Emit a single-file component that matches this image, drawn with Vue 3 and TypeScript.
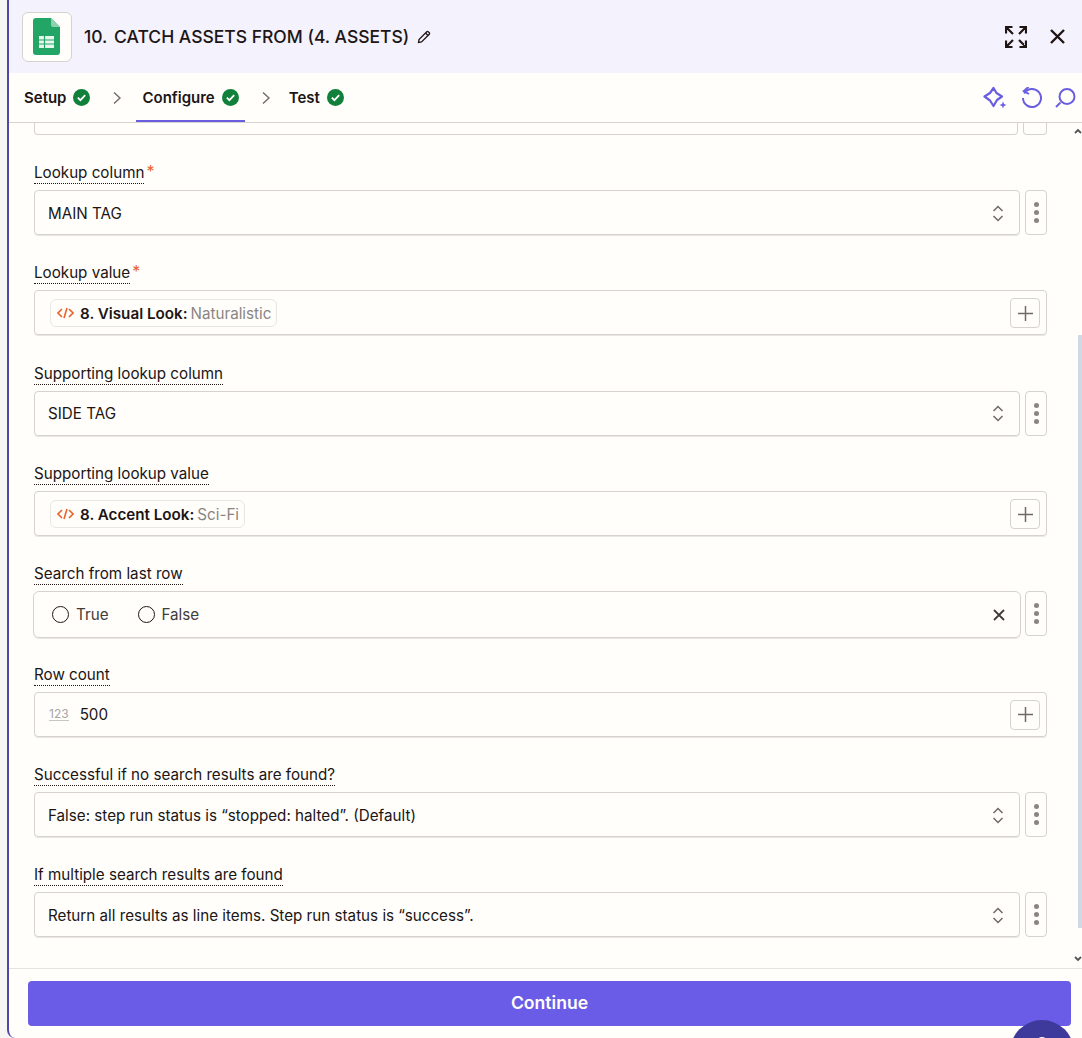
<script setup lang="ts">
interface Field {
  label: string
  required?: boolean
  kind: 'select' | 'pill' | 'radio' | 'number'
  value?: string
  pillKey?: string
}
const fields: Field[] = [
  { label: 'Lookup column', required: true, kind: 'select', value: 'MAIN TAG' },
  { label: 'Lookup value', required: true, kind: 'pill', pillKey: '8. Visual Look:', value: 'Naturalistic' },
  { label: 'Supporting lookup column', kind: 'select', value: 'SIDE TAG' },
  { label: 'Supporting lookup value', kind: 'pill', pillKey: '8. Accent Look:', value: 'Sci-Fi' },
  { label: 'Search from last row', kind: 'radio' },
  { label: 'Row count', kind: 'number', value: '500' },
  { label: 'Successful if no search results are found?', kind: 'select', value: 'False: step run status is “stopped: halted”. (Default)' },
  { label: 'If multiple search results are found', kind: 'select', value: 'Return all results as line items. Step run status is “success”.' },
]
const tabs = [
  { name: 'Setup', active: false },
  { name: 'Configure', active: true },
  { name: 'Test', active: false },
]
</script>

<template>
  <div class="page">
    <div class="panel">
      <header class="head">
        <div class="logo">
          <svg class="sheet" width="27" height="37" viewBox="0 0 27 37">
            <path d="M3 0H18L27 9V34a3 3 0 0 1-3 3H3a3 3 0 0 1-3-3V3a3 3 0 0 1 3-3Z" fill="#23a566" />
            <path d="M18 0L27 9H20a2 2 0 0 1-2-2Z" fill="#8ed1b1" />
            <path d="M6 18H21V30H6Z" fill="#e8f6ee" />
            <path d="M6 22H21M6 26H21M11.500 18V30" stroke="#23a566" stroke-width="1.200" />
          </svg>
        </div>
        <h1 class="title"><span class="step-no">10.</span> CATCH ASSETS FROM (4. ASSETS)</h1>
        <svg class="pencil" width="14" height="14" viewBox="0 0 14 14" fill="none" stroke="#201515" stroke-width="1.300">
          <path d="M1.500 12.500L2 9.500L9.800 1.700a1 1 0 0 1 1.400 0L12.300 2.800a1 1 0 0 1 0 1.400L4.500 12Z" />
          <path d="M8.500 3L11 5.500" />
        </svg>
        <div class="head-actions">
          <svg width="22" height="22" viewBox="0 0 22 22" fill="none" stroke="#201515" stroke-width="2.200">
            <path d="M1 7.500V1H7.500M1.500 1.500L8 8M14.500 1H21V7.500M20.500 1.500L14 8M1 14.500V21H7.500M1.500 20.500L8 14M21 14.500V21H14.500M20.500 20.500L14 14" />
          </svg>
          <svg class="close" width="15" height="15" viewBox="0 0 15 15" fill="none" stroke="#201515" stroke-width="2.400">
            <path d="M1 1L14 14M14 1L1 14" />
          </svg>
        </div>
      </header>

      <nav class="tabs">
        <template v-for="(t, i) in tabs" :key="t.name">
          <svg v-if="i > 0" class="chev" width="8" height="14" viewBox="0 0 8 14" fill="none" stroke="#6f6a68" stroke-width="1.400">
            <path d="M1 1.500L7 7L1 12.500" />
          </svg>
          <div class="tab" :class="{ active: t.active }">
            <span>{{ t.name }}</span>
            <svg width="17" height="17" viewBox="0 0 17 17">
              <circle cx="8.500" cy="8.500" r="8.500" fill="#10803a" />
              <path d="M4.800 8.700L7.400 11.200L12.200 6.200" fill="none" stroke="#fff" stroke-width="1.800" />
            </svg>
          </div>
        </template>
        <div class="tools">
          <svg width="25" height="24" viewBox="0 0 25 24" fill="none" stroke="#6a5ee0" stroke-width="2.200">
            <path d="M10.500 2L13.500 7L19 10.500L14 14L10.500 20L7 14.500L1.500 10.500L7 7Z" stroke-linejoin="round" />
            <path d="M20 15.500L21 18L23.500 19L21 20L20 22.500L19 20L16.500 19L19 18Z" fill="#6a5ee0" stroke="none" />
          </svg>
          <svg width="21" height="22" viewBox="0 1 21 22" fill="none" stroke="#6a5ee0" stroke-width="2">
            <path d="M3.200 7.500A9 9 0 1 1 2 12" />
            <path d="M7.500 1L2.800 5L8 8" />
          </svg>
          <svg width="21" height="22" viewBox="0 0 21 22" fill="none" stroke="#6a5ee0" stroke-width="2">
            <circle cx="12" cy="9.500" r="7.500" />
            <path d="M5.500 15.500L1 20" />
          </svg>
        </div>
      </nav>

      <main class="body">
        <div class="scroll-track"></div>
        <svg class="arrow up" width="8" height="6" viewBox="0 0 8 6" fill="none" stroke="#555" stroke-width="1.800"><path d="M1 5L4 2L7 5" /></svg>
        <svg class="arrow down" width="8" height="6" viewBox="0 0 8 6" fill="none" stroke="#555" stroke-width="1.800"><path d="M1 1L4 4L7 1" /></svg>

        <div class="stub">
          <div class="stub-box"></div>
          <div class="stub-more"></div>
        </div>

        <section v-for="f in fields" :key="f.label" class="field">
          <div class="label-row">
            <span class="label">{{ f.label }}</span>
            <span v-if="f.required" class="req">*</span>
          </div>

          <div class="row">
            <div class="box" :class="[`box-${f.kind}`]">
              <template v-if="f.kind === 'select'">
                <span class="text">{{ f.value }}</span>
                <svg class="updown" width="12" height="17" viewBox="0 0 12 17" fill="none" stroke="#6f6a68" stroke-width="1.500">
                  <path d="M1.500 6L6 1.500L10.500 6M1.500 11L6 15.500L10.500 11" />
                </svg>
              </template>

              <template v-else-if="f.kind === 'pill'">
                <span class="pill">
                  <svg width="17" height="12" viewBox="0 0 17 12" fill="none" stroke="#e8632a" stroke-width="1.600">
                    <path d="M5 2L1 6L5 10M12 2L16 6L12 10M10 1L7 11" />
                  </svg>
                  <b class="pill-key">{{ f.pillKey }}</b>
                  <span class="pill-val">{{ f.value }}</span>
                </span>
                <span class="plus">
                  <svg width="15" height="15" viewBox="0 0 15 15" stroke="#6f6a68" stroke-width="1.500"><path d="M7.500 0V15M0 7.500H15" /></svg>
                </span>
              </template>

              <template v-else-if="f.kind === 'radio'">
                <label class="radio"><i class="dot"></i>True</label>
                <label class="radio"><i class="dot"></i>False</label>
                <svg class="clear" width="12" height="12" viewBox="0 0 12 12" fill="none" stroke="#413c3a" stroke-width="1.800"><path d="M1 1L11 11M11 1L1 11" /></svg>
              </template>

              <template v-else>
                <span class="num-tag">123</span>
                <span class="text">{{ f.value }}</span>
                <span class="plus">
                  <svg width="15" height="15" viewBox="0 0 15 15" stroke="#6f6a68" stroke-width="1.500"><path d="M7.500 0V15M0 7.500H15" /></svg>
                </span>
              </template>
            </div>

            <div v-if="f.kind === 'select' || f.kind === 'radio'" class="more">
              <i></i><i></i><i></i>
            </div>
          </div>
        </section>
      </main>

      <footer class="foot">
        <button class="cta" type="button">Continue</button>
      </footer>
      <div class="chat"><span class="chat-glyph"></span></div>
    </div>
  </div>
</template>

<style>
html, body { margin: 0; background: #f7f6f3; }
</style>

<style scoped>
.page {
  width: 1082px;
  height: 1038px;
  padding-left: 7px;
  box-sizing: border-box;
  overflow: hidden;
  font-family: Inter, "Liberation Sans", sans-serif;
  color: #201515;
}
.panel {
  position: relative;
  height: 1038px;
  box-sizing: border-box;
  border-left: 2px solid #4f46a8;
  border-radius: 0 0 0 8px;
  background: #fffefb;
  display: flex;
  flex-direction: column;
  overflow: hidden;
}
.head {
  flex: none;
  height: 73px;
  background: #f3f2fd;
  display: flex;
  align-items: center;
  padding-left: 13px;
  box-sizing: border-box;
}
.logo {
  width: 50px;
  height: 50px;
  border: 1px solid #d6d3cf;
  border-radius: 6px;
  background: #fffefb;
  display: flex;
  align-items: center;
  justify-content: center;
  margin-right: 12px;
  box-sizing: border-box;
}
.sheet { margin-right: 1px; }
.title {
  margin: 0;
  font-size: 17.500px;
  font-weight: 500;
  white-space: nowrap;
}
.step-no { margin-right: 2px; }
.pencil { margin-left: 8px; }
.head-actions {
  margin-left: auto;
  display: flex;
  align-items: center;
  gap: 23px;
  padding-right: 17px;
}
.tabs {
  flex: none;
  height: 50px;
  box-sizing: border-box;
  border-bottom: 1px solid #d6d3cf;
  display: flex;
  align-items: stretch;
  padding-left: 15px;
}
.tab {
  display: flex;
  align-items: center;
  gap: 7px;
  font-size: 15px;
  font-weight: 600;
  height: 49px;
  box-sizing: border-box;
}
.tab.active {
  padding: 0 6px;
  box-shadow: inset 0 -2px 0 #6a5ee0;
}
.chev { align-self: center; margin: 0 19px 0 23px; }
.tab.active + .chev { margin-left: 17px; }
.chev:has(+ .tab.active) { margin-right: 15px; }
.tools {
  margin-left: auto;
  display: flex;
  align-items: center;
  gap: 13px;
  padding-right: 6px;
}
.body {
  position: relative;
  flex: 1;
  min-height: 0;
  overflow: hidden;
  padding: 0 35px 0 25px;
}
.scroll-track {
  position: absolute;
  right: 0;
  top: 212px;
  width: 4px;
  height: 593px;
  background: #d0dae6;
}
.arrow { position: absolute; right: 0; }
.arrow.up { top: 5px; }
.arrow.down { top: 833px; }
.stub { display: flex; gap: 5px; height: 12px; }
.stub-box {
  flex: 1;
  border: 1px solid #d6d3cf;
  border-top: 0;
  border-radius: 0 0 4px 4px;
}
.stub-more {
  width: 22px;
  border: 1px solid #d6d3cf;
  border-top: 0;
  border-radius: 0 0 4px 4px;
}
.field { margin-top: 28px; }
.field + .field { margin-top: 28.350px; }
.label-row { display: flex; align-items: flex-start; height: 27px; }
.label {
  font-size: 15.200px;
  line-height: 19px;
  border-bottom: 1px dotted #201515;
  height: 21px;
  box-sizing: border-box;
  white-space: nowrap;
}
.req { color: #e8632a; font-size: 16px; line-height: 17px; margin-left: 2px; }
.row { display: flex; gap: 5px; align-items: stretch; height: 45px; }
.box {
  flex: 1;
  min-width: 0;
  height: 45px;
  box-sizing: border-box;
  border: 1px solid #d6d3cf;
  border-radius: 4px;
  display: flex;
  align-items: center;
  padding: 1px 13px 0;
  font-size: 15.200px;
  box-shadow: 0 1px 0 #e9e7e3;
}
.box-radio {
  height: 47px;
  border-radius: 6px;
  margin-left: -1px;
  margin-right: -1px;
  padding: 0 13px 0 18px;
}
.text { white-space: nowrap; }
.updown { margin-left: auto; margin-right: 2px; }
.pill {
  display: inline-flex;
  align-items: center;
  height: 28px;
  box-sizing: border-box;
  padding: 0 5px 0 6px;
  margin-left: 2px;
  border: 1px solid #e9e7e3;
  border-radius: 6px;
  gap: 6px;
  white-space: nowrap;
}
.pill-key { font-weight: 600; }
.pill-val { color: #8a8583; margin-left: -3px; }
.plus {
  margin-left: auto;
  margin-right: -7px;
  width: 30px;
  height: 30px;
  box-sizing: border-box;
  border: 1px solid #d6d3cf;
  border-radius: 4px;
  display: flex;
  align-items: center;
  justify-content: center;
}
.radio { display: flex; align-items: center; gap: 7px; margin-right: 29px; color: #413c3a; }
.dot {
  width: 17px;
  height: 17px;
  box-sizing: border-box;
  border: 1.800px solid #201515;
  border-radius: 50%;
}
.clear { margin-left: auto; margin-right: 2px; }
.num-tag {
  font-size: 12px;
  color: #a9a5a2;
  border-bottom: 1px solid #c9c6c2;
  line-height: 12px;
  margin-left: 1px;
  margin-right: 11px;
}
.more {
  width: 22px;
  box-sizing: border-box;
  border: 1px solid #d6d3cf;
  border-radius: 4px;
  display: flex;
  flex-direction: column;
  align-items: center;
  justify-content: center;
  gap: 3px;
}
.more i {
  width: 5px;
  height: 5px;
  border-radius: 50%;
  background: #8a8583;
}
.foot {
  flex: none;
  height: 70px;
  box-sizing: border-box;
  border-top: 1px solid #e5e3df;
  padding: 12px 11px 0 19px;
}
.cta {
  width: 100%;
  height: 45px;
  border: 0;
  border-radius: 4px;
  background: #6a5ce6;
  color: #fffefb;
  font: 600 17.600px Inter, "Liberation Sans", sans-serif;
  padding: 0 0 2px;
}
.chat {
  position: absolute;
  right: 8px;
  top: 1020px;
  width: 64px;
  height: 64px;
  border-radius: 50%;
  background: #3d3a9c;
}
.chat-glyph {
  position: absolute;
  left: 26px;
  top: 17px;
  width: 12px;
  height: 12px;
  border-radius: 50%;
  background: #fffefb;
}
</style>
